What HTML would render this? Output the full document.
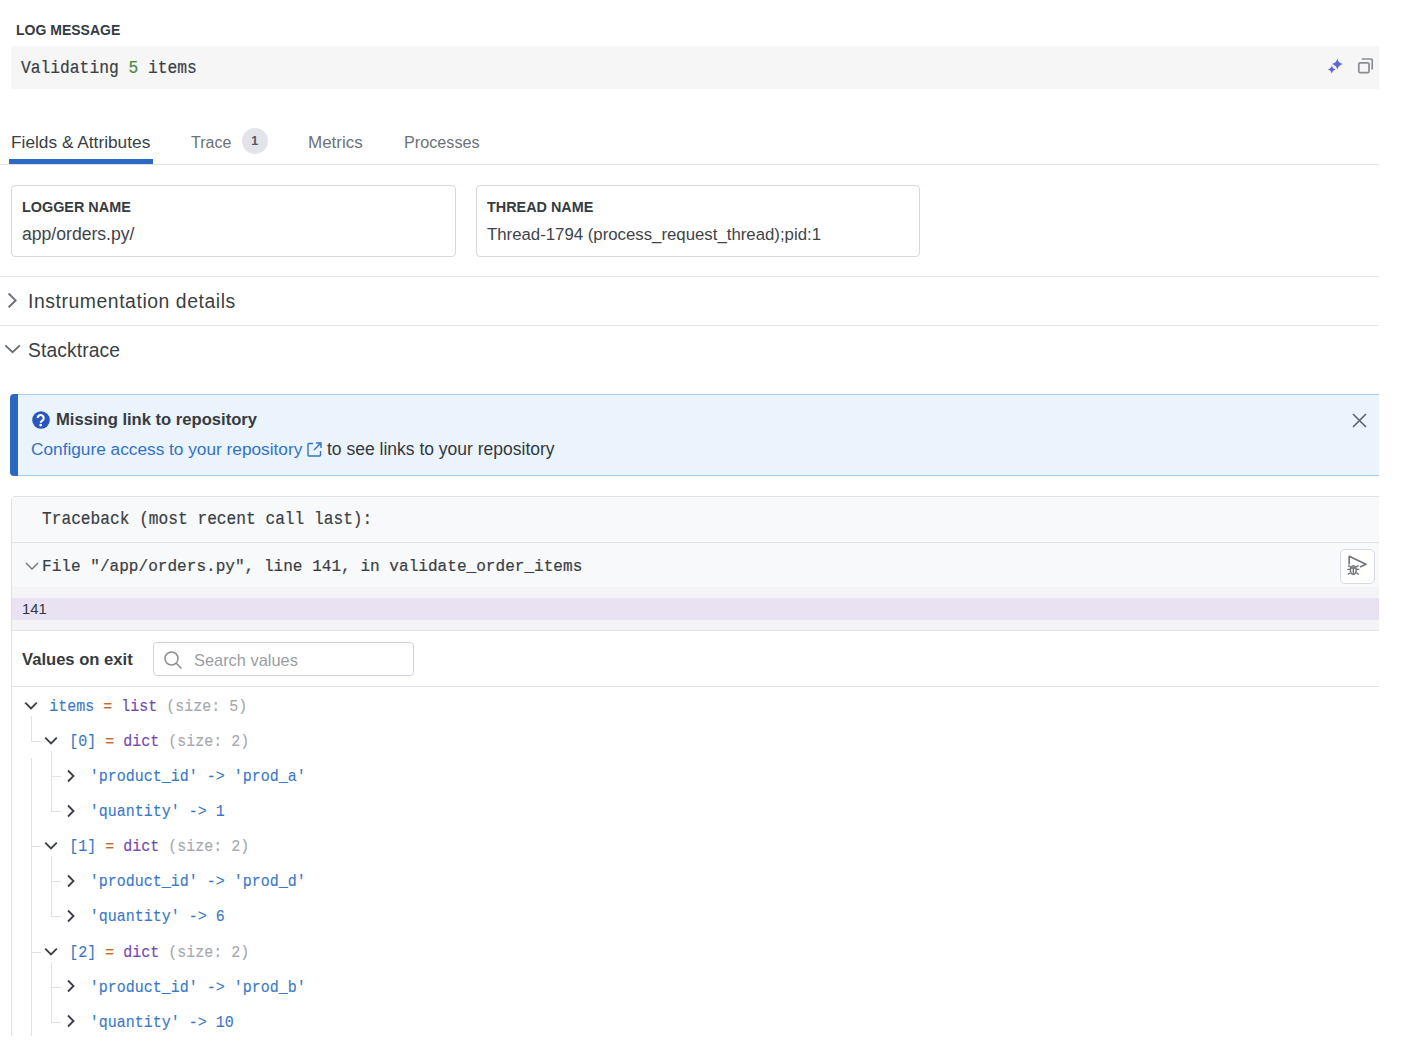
<!DOCTYPE html>
<html><head><meta charset="utf-8">
<style>
html,body{margin:0;padding:0;background:#fff;}
body{width:1422px;height:1060px;overflow:hidden;position:relative;font-family:"Liberation Sans",sans-serif;color:#33373d;}
.a{position:absolute;white-space:pre;line-height:1;}
.s{font-family:"Liberation Sans",sans-serif;}
.m{font-family:"Liberation Mono",monospace;}
.b{font-weight:700;}
.ty{transform:scaleY(1.08);transform-origin:0 0.8467em;}
.tym{transform:scaleY(1.08);transform-origin:0 0.766em;}
.clip{position:absolute;left:0;top:0;width:1379px;height:1036px;overflow:hidden;}
.r{position:absolute;}
</style></head>
<body>
<div class="clip">
  <!-- LOG MESSAGE -->
  <div class="a s b ty" style="left:16px;top:calc(35.3px - 0.8467em);font-size:14px;color:#363b42;">LOG MESSAGE</div>
  <div class="r" style="left:11px;top:46px;width:1368px;height:43px;background:#f6f6f6;"></div>
  <div class="a m tym" style="left:21px;top:calc(73.5px - 0.766em);font-size:16.3px;color:#3b4046;-webkit-text-stroke:0.2px currentColor;">Validating <span style="color:#4c8b41">5</span> items</div>
  <!-- sparkle icon -->
  <svg class="r" style="left:1327px;top:57px" width="17" height="17" viewBox="0 0 17 17">
    <path d="M10.30 1.50 Q11.31 6.09 15.90 7.10 Q11.31 8.11 10.30 12.70 Q9.29 8.11 4.70 7.10 Q9.29 6.09 10.30 1.50Z" fill="#5e66d4"/>
    <path d="M4.80 8.80 Q5.48 11.92 8.60 12.60 Q5.48 13.28 4.80 16.40 Q4.12 13.28 1.00 12.60 Q4.12 11.92 4.80 8.80Z" fill="#5e66d4"/>
  </svg>
  <!-- copy icon -->
  <svg class="r" style="left:1357px;top:57px" width="17" height="17" viewBox="0 0 17 17">
    <rect x="1.8" y="5.8" width="10.2" height="9.8" rx="1.2" fill="none" stroke="#8a8d92" stroke-width="1.7"/>
    <path d="M4.8 2 H14.2 a1 1 0 0 1 1 1 V12.6" fill="none" stroke="#8a8d92" stroke-width="1.7"/>
  </svg>

  <!-- Tabs -->
  <div class="a s" style="left:11px;top:calc(148.5px - 0.8467em);font-size:17.3px;color:#3a3f45;">Fields &amp; Attributes</div>
  <div class="a s" style="left:191px;top:calc(149px - 0.8467em);font-size:16px;color:#6d7177;">Trace</div>
  <div class="r" style="left:242px;top:128px;width:26px;height:26px;border-radius:13px;background:#e2e4ea;"></div>
  <div class="a s b" style="left:251.3px;top:calc(146px - 0.8467em);font-size:12.5px;color:#55595f;">1</div>
  <div class="a s" style="left:308px;top:calc(148.5px - 0.8467em);font-size:17px;color:#6d7177;">Metrics</div>
  <div class="a s" style="left:404px;top:calc(148.2px - 0.8467em);font-size:16.2px;color:#6d7177;">Processes</div>
  <div class="r" style="left:0;top:164px;width:1379px;height:1px;background:#dfe1ea;"></div>
  <div class="r" style="left:9px;top:159px;width:143.5px;height:5px;background:#2d68c2;"></div>

  <!-- Field boxes -->
  <div class="r" style="left:11px;top:185px;width:443px;height:70px;border:1px solid #d3d7e6;border-radius:4px;"></div>
  <div class="a s b ty" style="left:22px;top:calc(211.8px - 0.8467em);font-size:14.4px;color:#363b42;">LOGGER NAME</div>
  <div class="a s" style="left:22px;top:calc(241.3px - 0.8467em);font-size:17.6px;color:#3f444a;">app/orders.py/</div>
  <div class="r" style="left:476px;top:185px;width:442px;height:70px;border:1px solid #d3d7e6;border-radius:4px;"></div>
  <div class="a s b ty" style="left:487px;top:calc(211.8px - 0.8467em);font-size:14.4px;color:#363b42;">THREAD NAME</div>
  <div class="a s" style="left:487px;top:calc(241.3px - 0.8467em);font-size:16.8px;color:#3f444a;">Thread-1794 (process_request_thread);pid:1</div>

  <!-- Sections -->
  <div class="r" style="left:0;top:276px;width:1379px;height:1px;background:#e4e5ec;"></div>
  <svg class="r" style="left:6px;top:292px" width="12" height="17" viewBox="0 0 12 17">
    <path d="M2.6 1.5 L9.6 8.4 L2.6 15.3" fill="none" stroke="#6b7075" stroke-width="1.9"/>
  </svg>
  <div class="a s" style="left:28px;top:calc(308px - 0.8467em);font-size:19.4px;letter-spacing:0.55px;color:#3a3f45;">Instrumentation details</div>
  <div class="r" style="left:0;top:325px;width:1379px;height:1px;background:#e4e5ec;"></div>
  <svg class="r" style="left:4px;top:343px" width="17" height="12" viewBox="0 0 17 12">
    <path d="M1.3 2.4 L8.6 9.3 L15.9 2.4" fill="none" stroke="#6b7075" stroke-width="1.9"/>
  </svg>
  <div class="a s" style="left:28px;top:calc(357.3px - 0.8467em);font-size:19.3px;letter-spacing:0.1px;color:#3a3f45;">Stacktrace</div>

  <!-- Info box -->
  <div class="r" style="left:11px;top:394px;width:1380px;height:80px;background:#ebf4fc;border:1px solid #a8cdee;border-left:none;border-radius:4px 0 0 4px;"></div>
  <div class="r" style="left:10px;top:394px;width:8px;height:82px;background:#2c68c0;border-radius:4px 0 0 4px;"></div>
  <svg class="r" style="left:32px;top:411px" width="18" height="18" viewBox="0 0 18 18">
    <circle cx="9" cy="9" r="8.8" fill="#2957bd"/>
    <path d="M5.7 7.1 A3 3 0 1 1 10.4 9.5 C9.4 10.2 8.7 10.6 8.7 11.7" fill="none" stroke="#fff" stroke-width="2.1"/>
    <circle cx="8.7" cy="14.1" r="1.35" fill="#fff"/>
  </svg>
  <div class="a s b" style="left:56px;top:calc(426px - 0.8467em);font-size:16.6px;color:#363b42;">Missing link to repository</div>
  <div class="a s" style="left:31px;top:calc(455.5px - 0.8467em);font-size:17.25px;color:#3472c6;">Configure access to your repository</div>
  <svg class="r" style="left:306px;top:441px" width="17" height="17" viewBox="0 0 17 17">
    <path d="M7 2.5 H3 a1 1 0 0 0 -1 1 V14 a1 1 0 0 0 1 1 H13.5 a1 1 0 0 0 1 -1 V10" fill="none" stroke="#3472c6" stroke-width="1.4"/>
    <path d="M10 2 H15 V7 M15 2 L8 9" fill="none" stroke="#3472c6" stroke-width="1.4"/>
  </svg>
  <div class="a s" style="left:327px;top:calc(455.5px - 0.8467em);font-size:17.5px;color:#33383e;">to see links to your repository</div>
  <svg class="r" style="left:1351px;top:412px" width="17" height="17" viewBox="0 0 17 17">
    <path d="M2 2 L15 15 M15 2 L2 15" fill="none" stroke="#5d6268" stroke-width="1.6"/>
  </svg>

  <!-- Traceback box -->
  <div class="r" style="left:11px;top:496px;width:1380px;height:620px;border:1px solid #e0e2ea;border-radius:4px 0 0 0;background:#fff;"></div>
  <div class="r" style="left:12px;top:497px;width:1367px;height:45px;background:#f8f9fb;"></div>
  <div class="r" style="left:12px;top:542px;width:1367px;height:1px;background:#e2e4ec;"></div>
  <div class="r" style="left:12px;top:543px;width:1367px;height:44px;background:#f8f9fb;"></div>
  <div class="a m tym" style="left:42px;top:calc(524.8px - 0.766em);font-size:16.2px;color:#3b4046;-webkit-text-stroke:0.2px currentColor;">Traceback (most recent call last):</div>
  <svg class="r" style="left:24px;top:560px" width="16" height="12" viewBox="0 0 16 12">
    <path d="M2 3 L8 9 L14 3" fill="none" stroke="#6d7177" stroke-width="1.3"/>
  </svg>
  <div class="a m tym" style="left:42px;top:calc(571px - 0.766em);font-size:16.08px;color:#3b4046;-webkit-text-stroke:0.2px currentColor;">File "/app/orders.py", line 141, in validate_order_items</div>
  <div class="r" style="left:1340px;top:548.5px;width:33px;height:33px;border:1.5px solid #d6d9e6;border-radius:5px;background:#fff;"></div>
  <svg class="r" style="left:1335px;top:545px" width="45" height="45" viewBox="0 0 45 45">
    <path d="M14.2 19.5 V11.3 L31 19.2 L25 22" fill="none" stroke="#6f7378" stroke-width="1.6" stroke-linejoin="round"/>
    <ellipse cx="18.3" cy="25" rx="2.9" ry="4.3" fill="none" stroke="#6f7378" stroke-width="1.5"/>
    <path d="M13 20.6 L15.6 21.8 M23.6 20.6 L21 21.8 M12.3 24.4 H15.3 M24.3 24.4 H21.3 M12.8 29.4 L15.5 27.8 M23.8 29.4 L21.1 27.8 M18.3 21.5 V28.5 M15.6 23 H21" fill="none" stroke="#6f7378" stroke-width="1.3"/>
  </svg>
  <div class="r" style="left:12px;top:587px;width:1367px;height:43px;background:#f4f4f6;"></div>
  <div class="r" style="left:12px;top:598px;width:1367px;height:22px;background:#e8e2f2;"></div>
  <div class="a s" style="left:22px;top:calc(615px - 0.8467em);font-size:14.8px;color:#33383e;">141</div>
  <div class="r" style="left:12px;top:630px;width:1367px;height:1px;background:#e2e4ec;"></div>

  <!-- Values on exit -->
  <div class="a s b" style="left:22px;top:calc(666px - 0.8467em);font-size:16.6px;color:#363b42;">Values on exit</div>
  <div class="r" style="left:153px;top:642px;width:259px;height:32px;border:1px solid #cfd2e6;border-radius:4px;background:#fff;"></div>
  <svg class="r" style="left:163px;top:650px" width="20" height="20" viewBox="0 0 20 20">
    <circle cx="8.5" cy="8.5" r="6.5" fill="none" stroke="#8a8e94" stroke-width="1.5"/>
    <path d="M13.3 13.3 L18.5 18.5" stroke="#8a8e94" stroke-width="1.6"/>
  </svg>
  <div class="a s" style="left:194px;top:calc(666px - 0.8467em);font-size:16.4px;color:#9a9ea4;">Search values</div>
  <div class="r" style="left:12px;top:686px;width:1367px;height:1px;background:#e2e4ec;"></div>

  <!-- Tree -->
  <div id="tree">
<svg class="r" style="left:24px;top:700.9px" width="14" height="10" viewBox="0 0 14 10"><path d="M1.2 1.6 L7 7.5 L12.8 1.6" fill="none" stroke="#3a3f45" stroke-width="1.85"/></svg>
<div class="a m tym" style="left:49.2px;top:calc(711.3px - 0.766em);font-size:15px;-webkit-text-stroke:0.12px currentColor;"><span style="color:#3a78c6">items</span><span style="color:#c8692c"> = </span><span style="color:#7646b0">list</span><span style="color:#a6a9ae"> (size: 5)</span></div>
<svg class="r" style="left:44.3px;top:736.0px" width="14" height="10" viewBox="0 0 14 10"><path d="M1.2 1.6 L7 7.5 L12.8 1.6" fill="none" stroke="#3a3f45" stroke-width="1.85"/></svg>
<div class="a m tym" style="left:69.3px;top:calc(746.4px - 0.766em);font-size:15px;-webkit-text-stroke:0.12px currentColor;"><span style="color:#3a78c6">[0]</span><span style="color:#c8692c"> = </span><span style="color:#7646b0">dict</span><span style="color:#a6a9ae"> (size: 2)</span></div>
<svg class="r" style="left:65.8px;top:768.7px" width="10" height="14" viewBox="0 0 10 14"><path d="M2 1.5 L7.5 7 L2 12.5" fill="none" stroke="#3a3f45" stroke-width="1.85"/></svg>
<div class="a m tym" style="left:89.8px;top:calc(781.5px - 0.766em);font-size:15px;-webkit-text-stroke:0.12px currentColor;"><span style="color:#3a78c6">'product_id' -> 'prod_a'</span></div>
<svg class="r" style="left:65.8px;top:803.8px" width="10" height="14" viewBox="0 0 10 14"><path d="M2 1.5 L7.5 7 L2 12.5" fill="none" stroke="#3a3f45" stroke-width="1.85"/></svg>
<div class="a m tym" style="left:89.8px;top:calc(816.6px - 0.766em);font-size:15px;-webkit-text-stroke:0.12px currentColor;"><span style="color:#3a78c6">'quantity' -> 1</span></div>
<svg class="r" style="left:44.3px;top:841.3px" width="14" height="10" viewBox="0 0 14 10"><path d="M1.2 1.6 L7 7.5 L12.8 1.6" fill="none" stroke="#3a3f45" stroke-width="1.85"/></svg>
<div class="a m tym" style="left:69.3px;top:calc(851.7px - 0.766em);font-size:15px;-webkit-text-stroke:0.12px currentColor;"><span style="color:#3a78c6">[1]</span><span style="color:#c8692c"> = </span><span style="color:#7646b0">dict</span><span style="color:#a6a9ae"> (size: 2)</span></div>
<svg class="r" style="left:65.8px;top:874.0px" width="10" height="14" viewBox="0 0 10 14"><path d="M2 1.5 L7.5 7 L2 12.5" fill="none" stroke="#3a3f45" stroke-width="1.85"/></svg>
<div class="a m tym" style="left:89.8px;top:calc(886.8px - 0.766em);font-size:15px;-webkit-text-stroke:0.12px currentColor;"><span style="color:#3a78c6">'product_id' -> 'prod_d'</span></div>
<svg class="r" style="left:65.8px;top:909.1px" width="10" height="14" viewBox="0 0 10 14"><path d="M2 1.5 L7.5 7 L2 12.5" fill="none" stroke="#3a3f45" stroke-width="1.85"/></svg>
<div class="a m tym" style="left:89.8px;top:calc(921.9px - 0.766em);font-size:15px;-webkit-text-stroke:0.12px currentColor;"><span style="color:#3a78c6">'quantity' -> 6</span></div>
<svg class="r" style="left:44.3px;top:946.6px" width="14" height="10" viewBox="0 0 14 10"><path d="M1.2 1.6 L7 7.5 L12.8 1.6" fill="none" stroke="#3a3f45" stroke-width="1.85"/></svg>
<div class="a m tym" style="left:69.3px;top:calc(957.0px - 0.766em);font-size:15px;-webkit-text-stroke:0.12px currentColor;"><span style="color:#3a78c6">[2]</span><span style="color:#c8692c"> = </span><span style="color:#7646b0">dict</span><span style="color:#a6a9ae"> (size: 2)</span></div>
<svg class="r" style="left:65.8px;top:979.3px" width="10" height="14" viewBox="0 0 10 14"><path d="M2 1.5 L7.5 7 L2 12.5" fill="none" stroke="#3a3f45" stroke-width="1.85"/></svg>
<div class="a m tym" style="left:89.8px;top:calc(992.1px - 0.766em);font-size:15px;-webkit-text-stroke:0.12px currentColor;"><span style="color:#3a78c6">'product_id' -> 'prod_b'</span></div>
<svg class="r" style="left:65.8px;top:1014.4000000000001px" width="10" height="14" viewBox="0 0 10 14"><path d="M2 1.5 L7.5 7 L2 12.5" fill="none" stroke="#3a3f45" stroke-width="1.85"/></svg>
<div class="a m tym" style="left:89.8px;top:calc(1027.2px - 0.766em);font-size:15px;-webkit-text-stroke:0.12px currentColor;"><span style="color:#3a78c6">'quantity' -> 10</span></div>
<div class="r" style="left:31px;top:716.0px;width:1px;height:25.9px;background:#dfe1e9"></div>
<div class="r" style="left:31px;top:740.9px;width:10px;height:1px;background:#dfe1e9"></div>
<div class="r" style="left:31px;top:758.0px;width:1px;height:278.0px;background:#dfe1e9"></div>
<div class="r" style="left:31px;top:846.2px;width:10px;height:1px;background:#dfe1e9"></div>
<div class="r" style="left:31px;top:951.5px;width:10px;height:1px;background:#dfe1e9"></div>
<div class="r" style="left:51px;top:750.9px;width:1px;height:61.2px;background:#dfe1e9"></div>
<div class="r" style="left:51px;top:776.0px;width:10px;height:1px;background:#dfe1e9"></div>
<div class="r" style="left:51px;top:811.1px;width:10px;height:1px;background:#dfe1e9"></div>
<div class="r" style="left:51px;top:856.2px;width:1px;height:61.2px;background:#dfe1e9"></div>
<div class="r" style="left:51px;top:881.3px;width:10px;height:1px;background:#dfe1e9"></div>
<div class="r" style="left:51px;top:916.4px;width:10px;height:1px;background:#dfe1e9"></div>
<div class="r" style="left:51px;top:961.5px;width:1px;height:61.2px;background:#dfe1e9"></div>
<div class="r" style="left:51px;top:986.6px;width:10px;height:1px;background:#dfe1e9"></div>
<div class="r" style="left:51px;top:1021.7px;width:10px;height:1px;background:#dfe1e9"></div>

</div>
</div>
</body></html>
